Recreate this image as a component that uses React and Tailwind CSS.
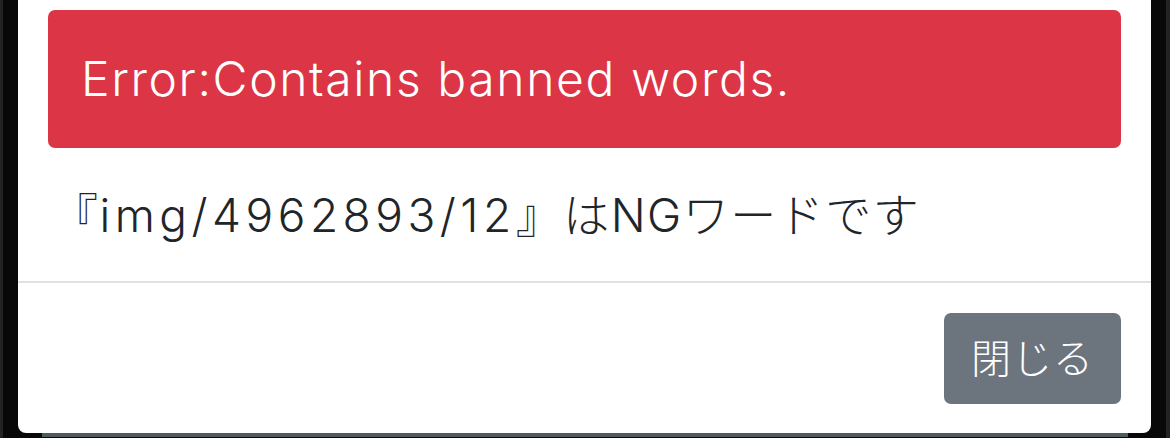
export default function App() {
  const font = { fontFamily: 'Inter, "Noto Sans CJK JP", sans-serif' };
  return (
    <div className="w-[1170px] h-[438px] overflow-hidden bg-[#080808] border-l-[3px] border-r-[4px] border-[#232323] flex flex-col" style={font}>
      <div className="mx-[15px] bg-white rounded-b-[8px] flex flex-col">
        <div className="px-[30px] pt-[10px]">
          <div className="h-[138px] bg-[#dc3545] rounded-[7px] flex items-center pl-[33px] text-white text-[48px] tracking-[1.6px] font-light leading-none">
            Error:Contains banned words.
          </div>
          <div className="h-[133px] flex items-center pl-[4px] text-[#212529] text-[46px] tracking-[1.5px] font-light leading-none">
            『<span className="tracking-[4.5px]">img/4962893/12</span>』はNGワードです
          </div>
        </div>
        <div className="h-[2px] bg-[#dee2e6]" />
        <div className="flex justify-end px-[30px] pt-[30px] pb-[29px]">
          <button className="w-[177px] h-[91px] bg-[#6c757d] rounded-[7px] text-white text-[40px] tracking-[1px] font-light leading-none flex items-center justify-center">
            閉じる
          </button>
        </div>
      </div>
      <div className="ml-[39px] mr-[38px] h-[4px] bg-[#4f5a5e]" />
    </div>
  );
}
